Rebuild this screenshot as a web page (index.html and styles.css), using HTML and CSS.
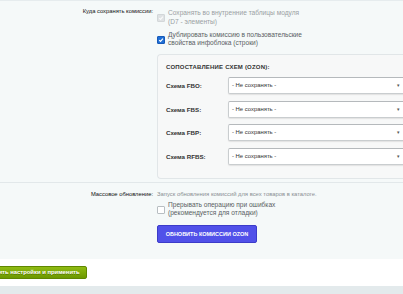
FILE: index.html
```html
<html>
    <head>
        <title>Настройки модуля</title>
        <link rel="stylesheet" href="styles.css">
    </head>
    <body>
        <div class="edit">
            <div class="row">
                <div class="label">Куда сохранять комиссии:</div>
                <div class="value">
                    <label class="check disabled">
                        <span class="box">
                            <svg width="6" height="6" viewBox="0 0 10 10"><path d="M2 5.2 L4.2 7.4 L8.2 2.8" fill="none" stroke="#fafafa" stroke-width="2"/></svg>
                        </span>
                        <span>Сохранять во внутренние таблицы модуля<br>(D7 - элементы)</span>
                    </label>
                    <label class="check">
                        <span class="box checked">
                            <svg width="6" height="6" viewBox="0 0 10 10"><path d="M2 5.2 L4.2 7.4 L8.2 2.8" fill="none" stroke="#fff" stroke-width="2"/></svg>
                        </span>
                        <span>Дублировать комиссию в пользовательские<br>свойства инфоблока (строки)</span>
                    </label>

                    <div class="schemes">
                        <div class="schemes-title">Сопоставление схем (OZON):</div>
                        <div class="scheme">
                            <div class="scheme-name">Схема FBO:</div>
                            <div class="select">- Не сохранять -<span class="arrow">▾</span></div>
                        </div>
                        <div class="scheme">
                            <div class="scheme-name">Схема FBS:</div>
                            <div class="select">- Не сохранять -<span class="arrow">▾</span></div>
                        </div>
                        <div class="scheme">
                            <div class="scheme-name">Схема FBP:</div>
                            <div class="select">- Не сохранять -<span class="arrow">▾</span></div>
                        </div>
                        <div class="scheme">
                            <div class="scheme-name">Схема RFBS:</div>
                            <div class="select">- Не сохранять -<span class="arrow">▾</span></div>
                        </div>
                    </div>
                </div>
            </div>

            <div class="row split">
                <div class="label">Массовое обновление:</div>
                <div class="value">
                    <div class="hint">Запуск обновления комиссий для всех товаров в каталоге.</div>
                    <label class="check">
                        <span class="box"></span>
                        <span>Прерывать операцию при ошибках<br>(рекомендуется для отладки)</span>
                    </label>
                    <div class="update-btn">Обновить комиссии OZON</div>
                </div>
            </div>
        </div>

        <div class="buttons">
            <div class="save-btn">Сохранить настройки и применить</div>
        </div>
        <div class="bottom"></div>
    </body>
</html>
```

FILE: styles.css
```css
body {
    margin: 0;
    font-family: "Liberation Sans", Arial, sans-serif;
    font-size: 6.5px;
    background-color: #e3eaec;
    overflow: hidden;
}

.edit {
    background-color: #f5f9f9;
    border-top: 1px solid #e6ecee;
    padding-top: 6px;
    padding-bottom: 16px;
}

.row {
    display: grid;
    grid-template-columns: 153px 1fr;
    column-gap: 4px;
}

.split {
    border-top: 1px solid #e2e8ea;
    margin-top: 2.5px;
    padding-top: 7px;
}

.label {
    text-align: right;
    color: #111;
    font-size: 5.8px;
    line-height: 9px;
}

.value {
    min-width: 0;
    padding-top: 2px;
}

.split .value {
    padding-top: 0;
}

.check {
    display: flex;
    align-items: center;
    gap: 3px;
    font-size: 6.6px;
    line-height: 8.5px;
    color: #5a5f63;
    margin-bottom: 4.5px;
}

.check.disabled {
    color: #9a9fa3;
}

.box {
    width: 6px;
    height: 6px;
    border: 1px solid #b8bec2;
    border-radius: 1px;
    background-color: #fff;
    display: flex;
    align-items: center;
    justify-content: center;
    flex-shrink: 0;
    margin-top: 1px;
}

.check.disabled .box {
    background-color: #dfe2e4;
    border-color: #d3d7d9;
}

.box.checked {
    background-color: #1f6fd6;
    border-color: #1659b8;
}

.schemes {
    margin-top: 6.5px;
    background-color: #f7f8f8;
    border: 1px solid #e1e6e8;
    border-right: none;
    border-radius: 4px 0 0 4px;
    padding: 8px 0 13.5px 8px;
    width: 300px;
}

.schemes-title {
    font-size: 6px;
    line-height: 8px;
    font-weight: bold;
    text-transform: uppercase;
    color: #333;
    letter-spacing: 0.2px;
    margin-bottom: 6px;
}

.scheme {
    display: flex;
    align-items: center;
    margin-bottom: 6.5px;
}

.scheme:last-child {
    margin-bottom: 0;
}

.scheme-name {
    width: 62px;
    font-size: 6.2px;
    font-weight: bold;
    color: #333;
}

.select {
    position: relative;
    width: 172px;
    height: 15px;
    line-height: 15px;
    padding-left: 3px;
    font-size: 5.9px;
    background-color: #fff;
    border: 1px solid #c9cdcf;
    border-top-color: #b5b9bc;
    border-radius: 2px;
    box-shadow: 0 1px 1px #e2e2e2;
    color: #333;
}

.arrow {
    position: absolute;
    right: 4px;
    top: 0;
    color: #555;
    font-size: 5px;
}

.hint {
    color: #8a8f93;
    font-size: 5.85px;
    line-height: 9px;
    margin-bottom: 2.25px;
}

.update-btn {
    margin-top: 7.25px;
    width: 98px;
    height: 16px;
    line-height: 16px;
    text-align: center;
    background-color: #5151e9;
    border: 1px solid #3c3cc9;
    border-radius: 2px;
    color: #fff;
    font-weight: bold;
    text-transform: uppercase;
    font-size: 5.5px;
}

.buttons {
    background-color: #fff;
    height: 27px;
    padding-top: 7px;
    box-sizing: border-box;
}

.save-btn {
    display: inline-block;
    margin-left: -33px;
    height: 11px;
    line-height: 11px;
    padding: 0 6px 0 9px;
    font-size: 5.9px;
    background: linear-gradient(#8fbb12, #6c9800);
    border: 1px solid #5f8700;
    border-radius: 2px;
    color: #fff;
    font-weight: bold;
    text-shadow: 0 1px 0 rgba(0,0,0,0.3);
}

.bottom {
    height: 10px;
    background-color: #e3eaec;
}
```
